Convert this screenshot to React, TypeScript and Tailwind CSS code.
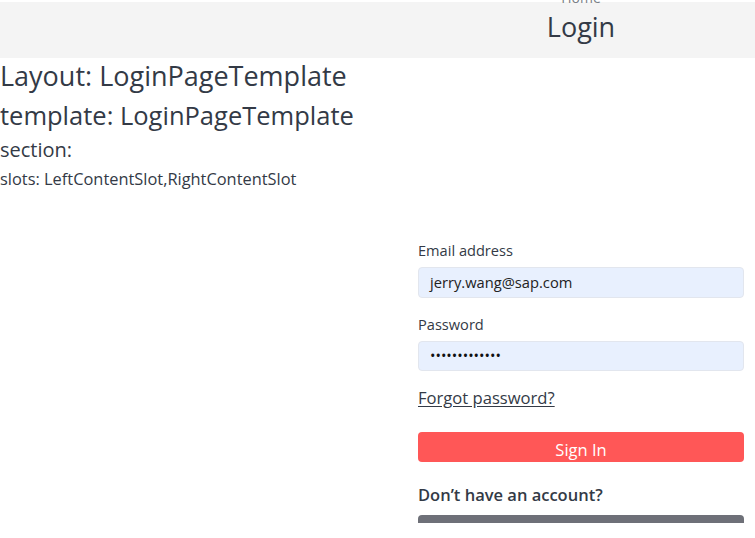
import React from 'react'

const font = { fontFamily: '"Open Sans", "Noto Sans", sans-serif' }

const LoginHeader = () => {
    return (
        <header className="h-[56px] bg-[#f4f4f4] flex">
            <div className="w-[418px]" />
            <div className="w-[326px] flex flex-col items-center">
                <span className="-mt-[14px] text-[14px] leading-[20px] text-[#7a7f87]">Home</span>
                <h1 className="-mt-[1px] text-[27px] leading-[40px] text-[#333a46]">Login</h1>
            </div>
        </header>
    )
}

const TemplateInfo = () => {
    return (
        <div className="text-[#333a46]">
            <div className="text-[27px] leading-[36px]">Layout: LoginPageTemplate</div>
            <div className="mt-[3px] text-[25.5px] leading-[36px]">template: LoginPageTemplate</div>
            <div className="mt-[3px] text-[20px] leading-[28px]">section:</div>
            <div className="mt-[3px] text-[16.4px] leading-[24px]">slots: LeftContentSlot,RightContentSlot</div>
        </div>
    )
}

const LoginForm = () => {
    return (
        <div className="flex justify-end pr-[11px] mt-[49px]">
            <form className="w-[326px] flex flex-col text-[#333a46]">
                <label className="text-[14.6px] leading-[20px]">Email address</label>
                <div className="mt-[7px] h-[31px] flex items-center px-[11px] rounded-[4px] border border-[#e2e6ee] bg-[#e8f0fe] text-[14.7px] text-[#222]">
                    jerry.wang@sap.com
                </div>

                <label className="mt-[16px] text-[14.6px] leading-[20px]">Password</label>
                <div className="mt-[7px] h-[30px] flex items-center px-[11px] rounded-[4px] border border-[#e2e6ee] bg-[#e8f0fe] text-[14.5px] text-[#111]">
                    •••••••••••••
                </div>

                <a href="#" className="mt-[15px] self-start text-[16.6px] leading-[24px] underline underline-offset-2">
                    Forgot password?
                </a>

                <button
                    type="button"
                    className="mt-[22px] h-[30px] pt-[6px] rounded-[4px] bg-[#ff5757] text-white text-[16.5px] leading-[24px]"
                >
                    Sign In
                </button>

                <h3 className="mt-[21px] text-[16.5px] leading-[24px] font-semibold">Don’t have an account?</h3>
                <div className="mt-[8px] h-[8px] rounded-t-[4px] bg-[#6e7078]" />
            </form>
        </div>
    )
}

export default function App() {
    return (
        <div className="w-[755px] h-[538px] overflow-hidden bg-white pt-[2px]" style={font}>
            <LoginHeader />
            <TemplateInfo />
            <LoginForm />
        </div>
    )
}
